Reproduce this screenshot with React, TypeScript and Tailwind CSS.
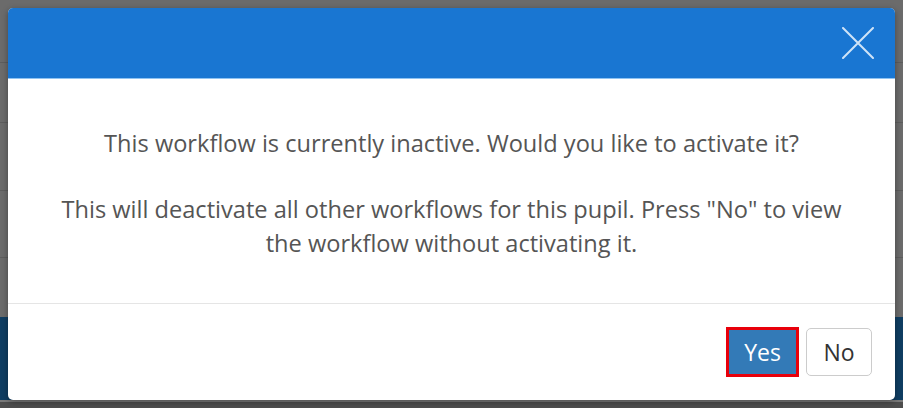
import React from "react";

export default function App() {
  return (
    <div className="relative w-[903px] h-[408px] overflow-hidden bg-[#6b6b6b]" style={{ fontFamily: '"Open Sans", "Noto Sans", sans-serif' }}>
      {/* background page under overlay */}
      <div className="flex flex-col w-full h-full">
        <div className="h-[63px] border-b border-[#5d5d5d]" />
        <div className="h-[60px] border-b border-[#5d5d5d]" />
        <div className="h-[68px] border-b border-[#5d5d5d]" />
        <div className="h-[67px] border-b border-[#5d5d5d]" />
        <div className="h-[59px]" />
        <div className="flex-1 bg-[#0f3d62]" />
        <div className="h-[8px] bg-[#4d4d4d] border-t-2 border-[#7a7a7a]" />
      </div>

      {/* modal */}
      <div className="absolute left-[8px] top-[8px] w-[887px] h-[392px] bg-white rounded-[5px] overflow-hidden flex flex-col shadow-[0_2px_6px_rgba(0,0,0,0.35)]">
        <div className="h-[71px] bg-[#1976d2] border-b border-[#8fc3f2] flex items-center justify-end pr-[20px] shrink-0">
          <svg width="32" height="32" viewBox="0 0 32 32" className="mr-[1px]">
            <path d="M1 1 L31 31 M31 1 L1 31" stroke="#cfe3f7" strokeWidth="2" strokeLinecap="round" />
          </svg>
        </div>
        <div className="h-[225px] shrink-0 border-b border-[#e5e5e5] flex flex-col items-center pt-[47px] text-[23.6px] leading-[34px] text-[#555555] text-center">
          <p className="whitespace-nowrap">This workflow is currently inactive. Would you like to activate it?</p>
          <p className="mt-[32px] whitespace-nowrap">
            This will deactivate all other workflows for this pupil. Press "No" to view
            <br />
            the workflow without activating it.
          </p>
        </div>
        <div className="flex-1 flex items-center justify-end pr-[23px] gap-[7px]">
          <button className="w-[73px] h-[50px] border-[3px] border-[#e8000b] bg-[#337ab7] text-white text-[23px] flex items-center justify-center">
            Yes
          </button>
          <button className="w-[66px] h-[48px] border border-[#cccccc] rounded-[5px] bg-white text-[#333333] text-[23px] flex items-center justify-center">
            No
          </button>
        </div>
      </div>
    </div>
  );
}
